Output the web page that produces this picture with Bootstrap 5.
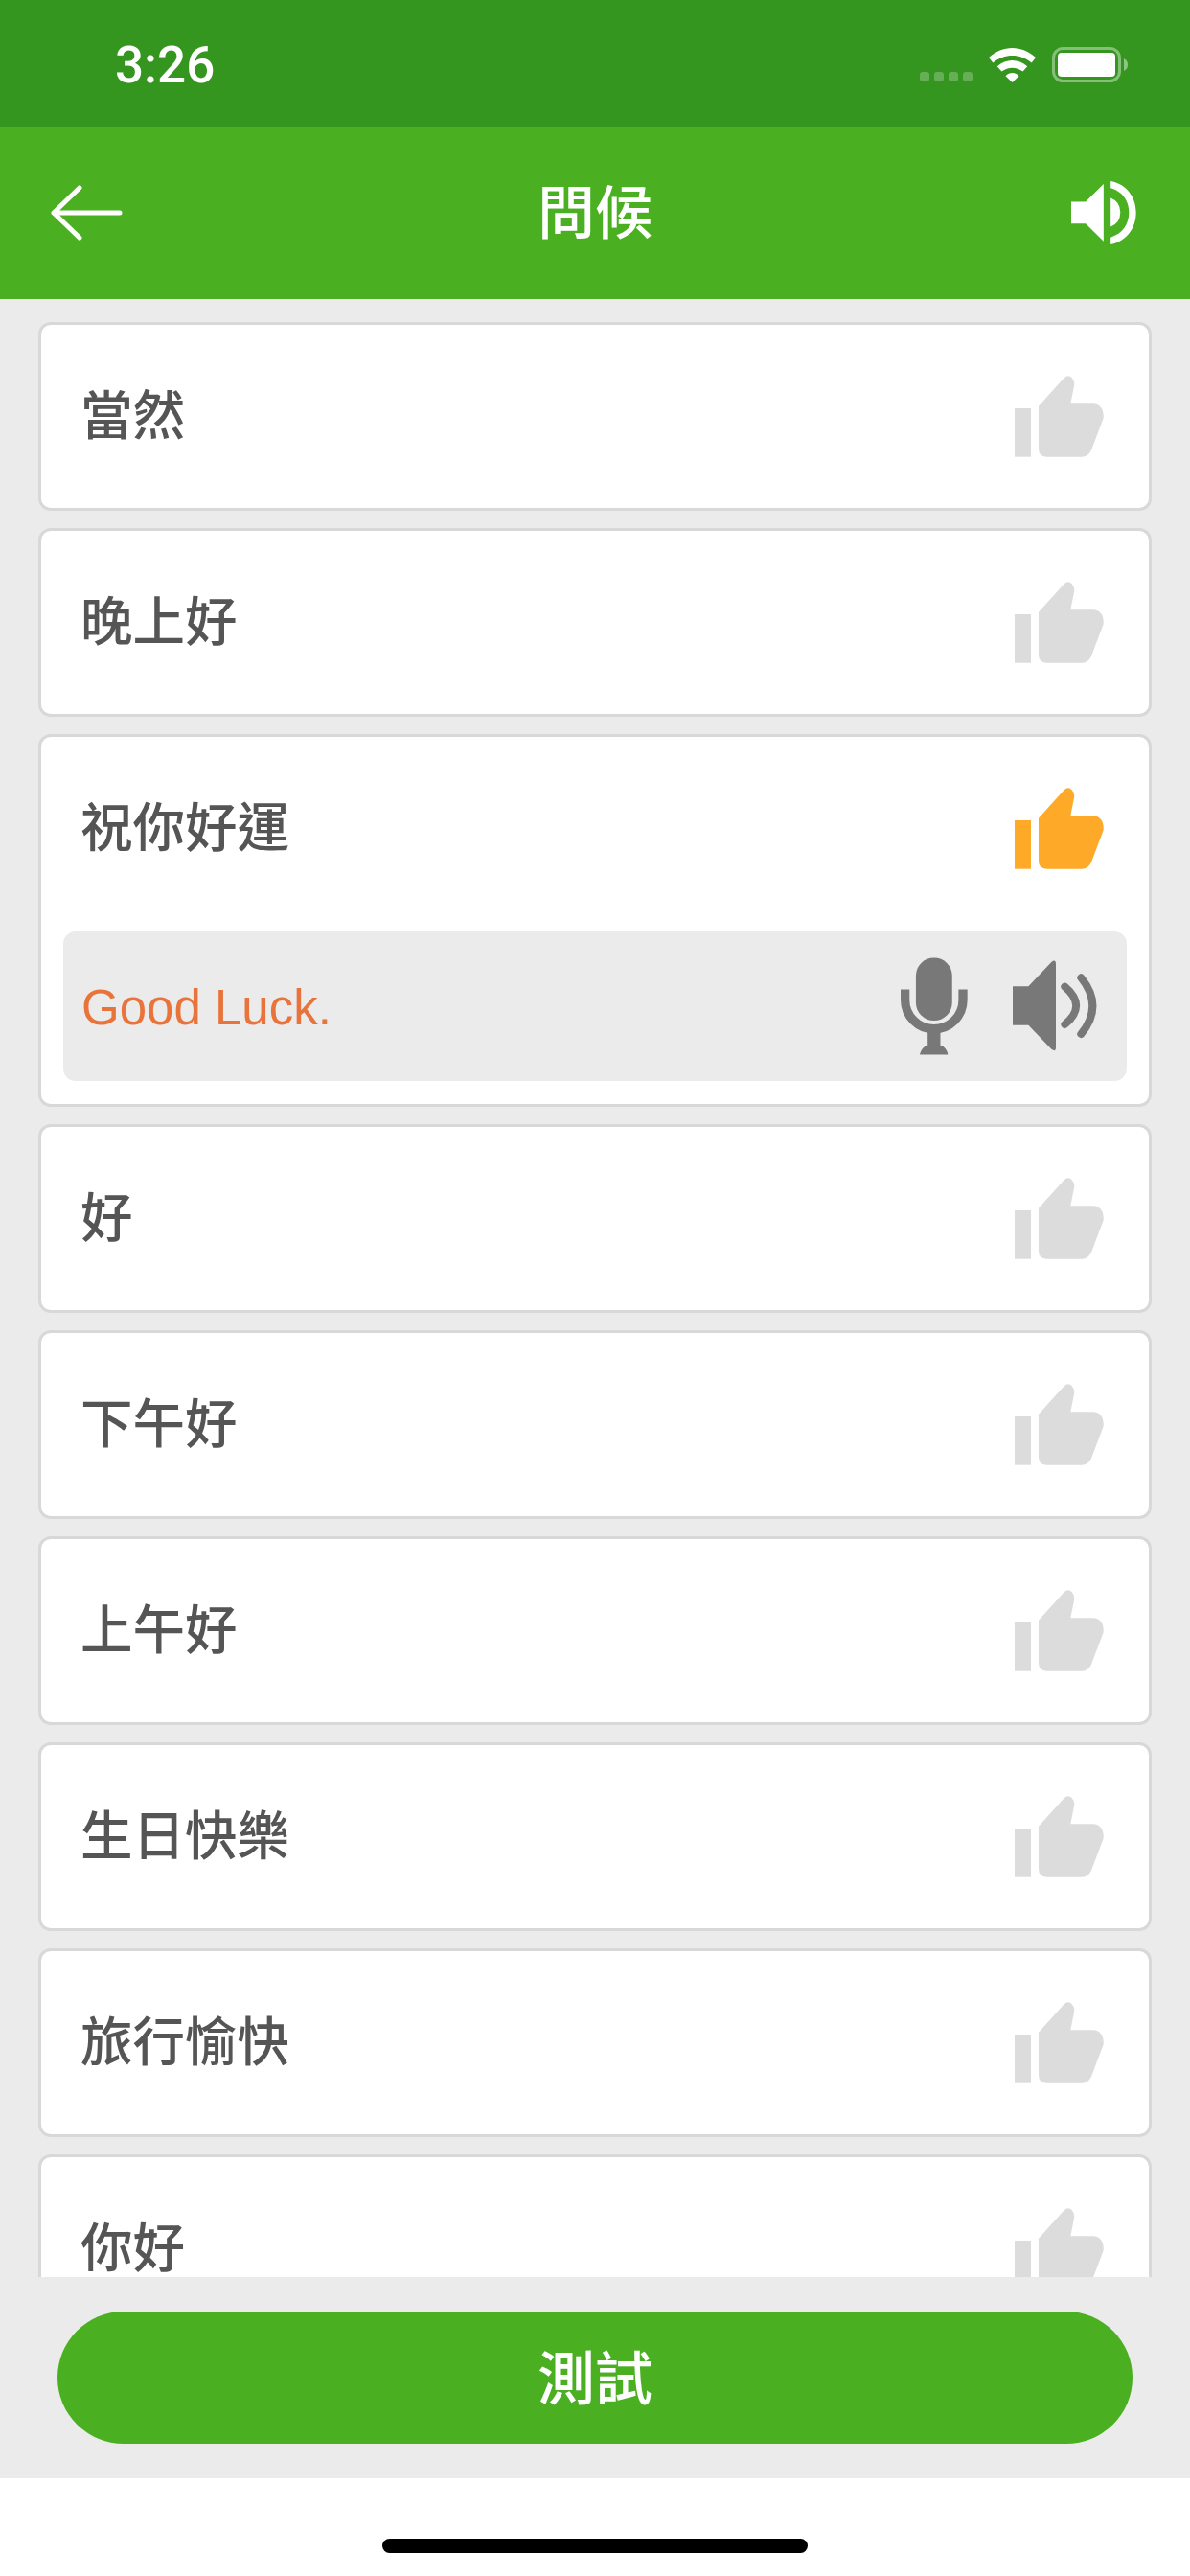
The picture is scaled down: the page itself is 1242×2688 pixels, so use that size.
<!DOCTYPE html>
<html lang="zh-Hant">
<head>
    <meta charset="UTF-8">
    <meta name="viewport" content="width=device-width, initial-scale=1.0">
    <title>問候</title>
    <link href="https://cdn.jsdelivr.net/npm/bootstrap@5.3.0/dist/css/bootstrap.min.css" rel="stylesheet">
    <style>
        body { background: #fff; font-family: "Liberation Sans", "Noto Sans CJK TC", sans-serif; }
        .phone { width: 1242px; height: 2688px; overflow: hidden; }

        .status-strip { height: 132px; background: #34951f; color: #fff; padding: 0 65px 0 120px; }
        .status-time { font: 500 53px/1 Roboto, "Liberation Sans", sans-serif; margin-top: 4px; }
        .status-icons { margin-top: 3px; }
        .signal-dots { gap: 5px; margin: 25px 17px 0 0; }
        .signal-dot { width: 10px; height: 10px; border-radius: 3px; background: rgba(255, 255, 255, .25); }
        .wifi-icon { width: 49px; height: 36px; margin-right: 17px; }
        .battery-icon { width: 79px; height: 37px; }

        .app-bar { height: 180px; background: #4ab022; color: #fff; padding: 0 56px 0 52px; flex-wrap: nowrap; }
        .app-bar-left { width: 84px; }
        .app-bar-right { width: 80px; }
        .app-title { font: 500 60px/1 "Noto Sans CJK TC", sans-serif; color: #fff; margin-top: -8px; }
        .back-icon { width: 76px; height: 58px; }
        .sound-icon { width: 68px; height: 66px; }

        .phrase-scroll { height: 2064px; background: #ebebeb; padding: 24px 40px 0; overflow: hidden; gap: 18px; }
        .phrase-card { flex-shrink: 0; background: #fff; border: 3px solid #d8d8d8; border-radius: 13px; color: #555; }
        .phrase-row { height: 191px; padding: 0 46px 0 41px; }
        .phrase-text { font: 500 54.5px/1 "Noto Sans CJK TC", sans-serif; margin-top: -8px; }
        .thumb-icon { width: 95px; height: 85px; color: #dcdcdc; }
        .thumb-icon.is-on { color: #ffa928; }

        .answer-box { height: 156px; margin: 12px 23px 24px; padding: 0 31px 0 19px; background: #ebebeb; border-radius: 13px; }
        .answer-text { font-size: 51px; line-height: 1; color: #e8743b; margin-top: 2px; }
        .mic-icon { width: 70px; height: 102px; }
        .speaker-icon { width: 88px; height: 96px; margin-left: 47px; }

        .test-strip { height: 210px; background: #ebebeb; padding: 36px 60px; }
        .test-btn { height: 138px; width: 100%; padding: 0 0 6px; background: #4ab022; border: 0; border-radius: 69px; color: #fff; font: 500 60px/1 "Noto Sans CJK TC", sans-serif; }
        .test-btn:hover { background: #4ab022; color: #fff; }

        .home-strip { height: 102px; padding-top: 63px; }
        .home-bar { width: 444px; height: 15px; background: #000; border-radius: 8px; }
    </style>
</head>
<body>
    <svg width="0" height="0" class="position-absolute">
        <symbol id="thumb" viewBox="477 95 279 255">
            <rect x="477" y="197" width="51" height="152" fill="currentColor"/>
            <path fill="currentColor" d="M552 190 L632 102 Q645 90 656 102 Q666 112 663 127 L652 183 L722 183 Q757 185 755 228 L717 328 Q707 349 688 349 L577 349 Q552 349 552 324 Z"/>
        </symbol>
    </svg>

    <div class="phone d-flex flex-column">
        <div class="status-strip d-flex align-items-center">
            <div class="status-time">3:26</div>
            <div class="status-icons ms-auto d-flex align-items-center">
                <div class="signal-dots d-flex">
                    <span class="signal-dot"></span><span class="signal-dot"></span><span class="signal-dot"></span><span class="signal-dot"></span>
                </div>
                <svg class="wifi-icon" viewBox="337 88 146 107" fill="#fff">
                    <path d="M337 118 C380 78 440 78 483 118 L470 134 C435 104 385 104 350 134 Z"/>
                    <path d="M363 145 C392 120 428 120 457 145 L443 161 C423 146 397 146 377 161 Z"/>
                    <path d="M389 175 C402 162 418 162 431 175 L410 195 Z"/>
                </svg>
                <svg class="battery-icon" viewBox="0 0 79 37">
                    <rect x="1.5" y="1.5" width="69" height="34" rx="10" fill="none" stroke="#fff" stroke-opacity=".4" stroke-width="3"/>
                    <rect x="6" y="6" width="60" height="25" rx="4" fill="#fff"/>
                    <path d="M75 12 Q79 14 79 18.500 Q79 23 75 25 Z" fill="#fff" fill-opacity=".45"/>
                </svg>
            </div>
        </div>

        <nav class="navbar app-bar justify-content-between">
            <div class="app-bar-left">
                <svg class="back-icon d-block" viewBox="0 0 76 58" fill="none" stroke="#fff" stroke-width="5" stroke-linecap="round" stroke-linejoin="round">
                    <path d="M73 29 H4 M31 3 L4 29 L31 55"/>
                </svg>
            </div>
            <span class="app-title">問候</span>
            <div class="app-bar-right d-flex justify-content-end">
                <svg class="sound-icon d-block" viewBox="595 508 203 197" fill="#fff">
                    <path d="M595 572 H640 L696 517 V695 L640 640 H595 Z"/>
                    <path d="M718 560 Q748 572 748 605 Q748 638 718 650 Z"/>
                    <path d="M718 508 C770 518 797 560 797 606 C797 652 770 695 718 705 V683 C755 672 775 642 775 606 C775 570 755 540 718 530 Z"/>
                </svg>
            </div>
        </nav>

        <div class="phrase-scroll d-flex flex-column" id="phraseList"></div>

        <div class="test-strip">
            <button type="button" class="btn test-btn">測試</button>
        </div>

        <div class="home-strip d-flex justify-content-center">
            <div class="home-bar"></div>
        </div>
    </div>

    <script src="https://cdn.jsdelivr.net/npm/bootstrap@5.3.0/dist/js/bootstrap.bundle.min.js"></script>
    <script>
        const phrases = [
            { text: '當然' },
            { text: '晚上好' },
            { text: '祝你好運', answer: 'Good Luck.' },
            { text: '好' },
            { text: '下午好' },
            { text: '上午好' },
            { text: '生日快樂' },
            { text: '旅行愉快' },
            { text: '你好' }
        ];

        const answerIcons = `
            <svg class="mic-icon ms-auto" viewBox="120 627 211 305" fill="#787878">
                <rect x="168" y="627" width="114" height="198" rx="57"/>
                <path d="M134 727 V760 A91 91 0 0 0 316 760 V727" fill="none" stroke="#787878" stroke-width="28" stroke-linejoin="round"/>
                <path d="M205 860 H245 V902 Q265 908 269 932 H180 Q185 908 205 902 Z"/>
            </svg>
            <svg class="speaker-icon" viewBox="471 637 264 288" fill="#787878">
                <path d="M471 719 H520 L592 643 Q606 632 606 650 V910 Q606 926 592 915 L520 840 H471 Z"/>
                <path d="M634 720 Q705 780 634 838 M685 692 Q757 780 685 868" fill="none" stroke="#787878" stroke-width="24" stroke-linecap="round"/>
            </svg>`;

        // build the phrase cards
        document.getElementById('phraseList').innerHTML = phrases.map(p => `
            <div class="card phrase-card">
                <div class="phrase-row d-flex align-items-center justify-content-between">
                    <span class="phrase-text">${p.text}</span>
                    <svg class="thumb-icon ${p.answer ? 'is-on' : ''}"><use href="#thumb"/></svg>
                </div>
                ${p.answer ? `<div class="answer-box d-flex align-items-center">
                    <span class="answer-text">${p.answer}</span>${answerIcons}
                </div>` : ''}
            </div>`).join('');
    </script>
</body>
</html>
